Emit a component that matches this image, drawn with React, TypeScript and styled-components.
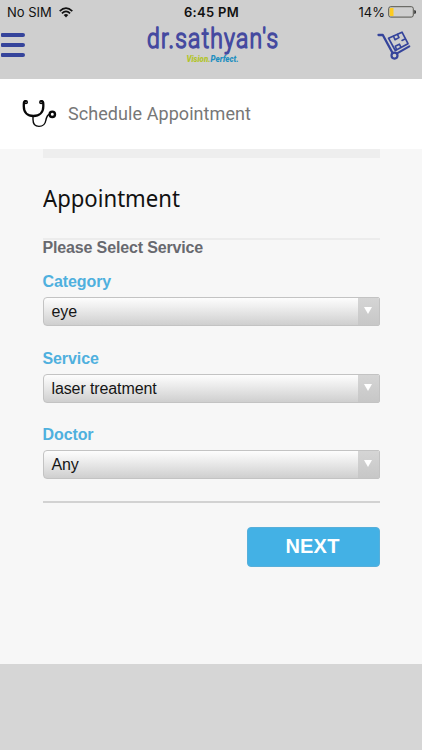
import React from "react";
import styled, { createGlobalStyle } from "styled-components";

const GlobalStyle = createGlobalStyle`
  * { box-sizing: border-box; }
  body { margin: 0; background: #d6d6d6; }
`;

const Screen = styled.div`
  width: 422px;
  height: 750px;
  display: flex;
  flex-direction: column;
  overflow: hidden;
  background: #d6d6d6;
  font-family: "Liberation Sans", Arial, sans-serif;
`;

const Header = styled.header`
  height: 79px;
  flex: none;
  background: #cfcfcf;
`;

const StatusBar = styled.div`
  height: 24px;
  display: grid;
  grid-template-columns: 1fr auto 1fr;
  align-items: center;
  padding: 0 6px 0 7px;
  font-family: Inter, "Liberation Sans", sans-serif;
  color: #111;
`;

const StatusGroup = styled.div<{ $end?: boolean }>`
  display: flex;
  align-items: center;
  justify-content: ${(p) => (p.$end ? "flex-end" : "flex-start")};
  gap: ${(p) => (p.$end ? 3 : 7)}px;
`;

const StatusText = styled.span<{ $bold?: boolean; $spacing: number }>`
  font-size: 13px;
  line-height: 24px;
  font-weight: ${(p) => (p.$bold ? 600 : 400)};
  letter-spacing: ${(p) => p.$spacing}px;
  white-space: nowrap;
`;

const NavRow = styled.div`
  display: flex;
  justify-content: space-between;
  align-items: flex-start;
  height: 55px;
  padding-right: 10px;
`;

const MenuButton = styled.div`
  width: 46px;
  padding: 9px 0 0 1px;
  display: flex;
  flex-direction: column;
  gap: 6px;
`;

const MenuBar = styled.span`
  width: 24px;
  height: 4px;
  border-radius: 1px 2px 2px 1px;
  background: #35449b;
`;

const Logo = styled.svg`
  display: block;
  flex: none;
  overflow: visible;
  font-family: Roboto, sans-serif;
`;

const Cart = styled.svg`
  display: block;
  margin-top: 7px;
`;

const TitleBar = styled.div`
  height: 70px;
  flex: none;
  background: #fff;
  display: flex;
  align-items: center;
  padding-left: 21px;
  gap: 10px;
`;

const Title = styled.h1`
  margin: 0;
  font: 400 18px/24px Roboto, sans-serif;
  letter-spacing: 0.07px;
  color: #777;
`;

const Content = styled.main`
  height: 515px;
  flex: none;
  padding: 0 42.5px 0 42.5px;
  background: #f7f7f7;
  display: flex;
  flex-direction: column;
`;

const PanelEdge = styled.div`
  height: 9px;
  flex: none;
  background: #eeeeee;
`;

const Heading = styled.h2`
  margin: 0;
  height: 82px;
  padding-top: 24px;
  border-bottom: 2px solid #ececec;
  font: 400 24px/32px "Noto Sans", sans-serif;
  color: #111;
  flex: none;
`;

const HeadingText = styled.span`
  display: inline-block;
  transform: scaleX(0.922);
  transform-origin: left;
`;

const Prompt = styled.div`
  height: 33px;
  font-size: 16px;
  line-height: 15px;
  font-weight: 700;
  letter-spacing: -0.15px;
  color: #68696f;
`;

const Field = styled.div`
  height: 76.5px;
  flex: none;
`;

const Label = styled.div`
  height: 24px;
  font-size: 16px;
  line-height: 18px;
  font-weight: 700;
  letter-spacing: -0.1px;
  color: #4fb0de;
`;

const Select = styled.div`
  height: 29px;
  display: flex;
  border: 1px solid #c3c3c3;
  border-radius: 4px 2px 2px 4px;
  overflow: hidden;
  background: linear-gradient(#fdfdfd, #f0f0f0 30%, #cfcfcf);
`;

const Value = styled.div`
  flex: 1;
  padding-left: 8px;
  font-size: 16px;
  line-height: 28px;
  letter-spacing: -0.11px;
  color: #151515;
`;

const Arrow = styled.div`
  width: 21px;
  display: flex;
  justify-content: center;
  padding-top: 9px;
  background: linear-gradient(#d5d5d5, #c7c7c7);
`;

const Divider = styled.div`
  height: 2px;
  flex: none;
  margin-top: -2px;
  background: #d2d2d2;
`;

const NextButton = styled.button`
  align-self: flex-end;
  width: 133px;
  height: 40px;
  margin-top: 24px;
  padding: 0 1px 2px 0;
  border: 1px solid #57afda;
  border-radius: 4px;
  background: #43b1e5;
  color: #fff;
  font: 700 20px/36px "Liberation Sans", Arial, sans-serif;
  letter-spacing: 0.2px;
`;

const fields = [
  { label: "Category", value: "eye" },
  { label: "Service", value: "laser treatment" },
  { label: "Doctor", value: "Any" },
];

function WifiIcon() {
  return (
    <svg width="14" height="11" viewBox="0 0 14 11" fill="none" stroke="#111" strokeWidth="1.7">
      <path d="M0.7 4.2Q7-1.8 13.3 4.2M2.9 6.4Q7 2.5 11.1 6.4" />
      <path d="M4.7 8.1Q7 6 9.3 8.1L7 10.5Z" fill="#111" stroke="none" />
    </svg>
  );
}

function BatteryIcon() {
  return (
    <svg width="28" height="12" viewBox="0 0 28 12">
      <rect x="0.7" y="0.7" width="24.6" height="10.4" rx="2" fill="none" stroke="#55554f" />
      <path d="M2.5 2H5.5V10H2.5Q1.7 10 1.7 9V3Q1.7 2 2.5 2Z" fill="#fdcb20" />
      <path d="M26.3 4Q28 4.2 28 6T26.3 8Z" fill="#222" />
    </svg>
  );
}

function CartIcon() {
  return (
    <Cart width="35" height="30" viewBox="0 0 35 30" fill="none" stroke="#35449b" strokeLinejoin="round" strokeLinecap="round">
      <path d="M1.5 4H5.8L15.3 21.5" strokeWidth="2.3" />
      <path d="M20.5 22.2L32.3 15.3" strokeWidth="2.1" />
      <circle cx="17.5" cy="24.6" r="3" strokeWidth="2.2" />
      <path d="M11.5 7.2L25 1.2L31 12.7L18.3 19.5Z" strokeWidth="1.7" />
      <path d="M16.5 5.2L18 8.7L22 6.6L20.4 3.4M19.5 18.6L18.3 15.3L22.4 13.2L24 16.3M25 9.5L27.5 8.3" strokeWidth="1.6" />
    </Cart>
  );
}

function StethoscopeIcon() {
  return (
    <svg width="37" height="30" viewBox="0 0 37 30" fill="none" stroke="#080808" strokeLinecap="round">
      <path d="M4.5 2.2Q2.8 2.3 2.8 5V7.5C2.8 13.4 6.5 17 12.4 17S22.3 13.4 22.3 7.5V5Q22.3 2.3 20.5 2.2" strokeWidth="2.3" />
      <circle cx="4.9" cy="3.2" r="1.4" strokeWidth="1.5" />
      <circle cx="20.2" cy="3.2" r="1.4" strokeWidth="1.5" />
      <path d="M12 17V20.5C12 25 14.5 27.4 18 27.4C21.5 27.4 24.2 25 24.8 21.5C25.5 18 26.3 15.6 28.5 15.2" strokeWidth="1.4" />
      <circle cx="31.3" cy="15.3" r="2.7" strokeWidth="2.4" />
    </svg>
  );
}

export default function App() {
  return (
    <Screen>
      <GlobalStyle />
      <Header>
        <StatusBar>
          <StatusGroup>
            <StatusText $spacing={0}>No SIM</StatusText>
            <WifiIcon />
          </StatusGroup>
          <StatusText $bold $spacing={0.3}>6:45 PM</StatusText>
          <StatusGroup $end>
            <StatusText $spacing={0}>14%</StatusText>
            <BatteryIcon />
          </StatusGroup>
        </StatusBar>
        <NavRow>
          <MenuButton>
            <MenuBar />
            <MenuBar />
            <MenuBar />
          </MenuButton>
          <Logo width="140" height="44" viewBox="0 0 140 44">
            <g transform="translate(5 24) scale(0.82 1)">
              <text x="0" y="0" fontSize="28" fontWeight="300" fill="#454aa0" stroke="#454aa0" strokeWidth="1.5" strokeLinejoin="round" textLength="160" lengthAdjust="spacing">
                dr.sathyan's
              </text>
            </g>
            <text x="44.5" y="38" fontSize="9.5" fontWeight="900" fontStyle="italic" fill="#b2c42c" textLength="24" lengthAdjust="spacingAndGlyphs">
              Vision.
            </text>
            <text x="68.5" y="38" fontSize="9.5" fontWeight="900" fontStyle="italic" fill="#1f8fc0" textLength="28" lengthAdjust="spacingAndGlyphs">
              Perfect.
            </text>
          </Logo>
          <CartIcon />
        </NavRow>
      </Header>
      <TitleBar>
        <StethoscopeIcon />
        <Title>Schedule Appointment</Title>
      </TitleBar>
      <Content>
        <PanelEdge />
        <Heading>
          <HeadingText>Appointment</HeadingText>
        </Heading>
        <Prompt>Please Select Service</Prompt>
        {fields.map((f) => (
          <Field key={f.label}>
            <Label>{f.label}</Label>
            <Select>
              <Value>{f.value}</Value>
              <Arrow>
                <svg width="8" height="7" viewBox="0 0 8 7">
                  <path d="M0 0H8L4 7Z" fill="#fff" />
                </svg>
              </Arrow>
            </Select>
          </Field>
        ))}
        <Divider />
        <NextButton>NEXT</NextButton>
      </Content>
    </Screen>
  );
}
